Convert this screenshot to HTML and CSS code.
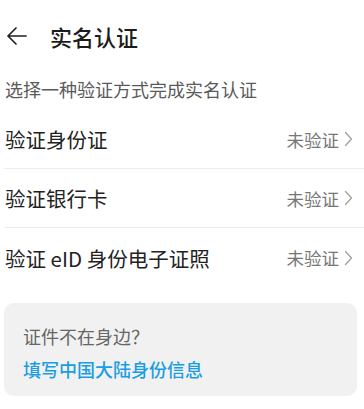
FILE: index.html
```html
<!DOCTYPE html>
<html lang="zh-CN">
<head>
<meta charset="utf-8">
<title>实名认证</title>
<link rel="stylesheet" href="styles.css">
</head>
<body>
<div class="page">
  <header class="header">
    <svg class="back" width="21" height="20" viewBox="0 0 21 20" aria-hidden="true">
      <path d="M20 10H2M10 2L2 10l8 8" fill="none" stroke="#222" stroke-width="1.7" stroke-linecap="round" stroke-linejoin="round"/>
    </svg>
    <h1 class="title">实名认证</h1>
  </header>
  <p class="subtitle">选择一种验证方式完成实名认证</p>
  <ul class="list">
    <li class="row"><span class="label">验证身份证</span><span class="status">未验证<svg class="chev" width="9" height="16" viewBox="0 0 9 16"><path d="M1.5 1.5L7.5 8L1.5 14.5" fill="none" stroke="#a0a0a0" stroke-width="1.3" stroke-linecap="round" stroke-linejoin="round"/></svg></span></li>
    <li class="row"><span class="label">验证银行卡</span><span class="status">未验证<svg class="chev" width="9" height="16" viewBox="0 0 9 16"><path d="M1.5 1.5L7.5 8L1.5 14.5" fill="none" stroke="#a0a0a0" stroke-width="1.3" stroke-linecap="round" stroke-linejoin="round"/></svg></span></li>
    <li class="row"><span class="label">验证 eID 身份电子证照</span><span class="status">未验证<svg class="chev" width="9" height="16" viewBox="0 0 9 16"><path d="M1.5 1.5L7.5 8L1.5 14.5" fill="none" stroke="#a0a0a0" stroke-width="1.3" stroke-linecap="round" stroke-linejoin="round"/></svg></span></li>
  </ul>
  <div class="card">
    <p class="card-text">证件不在身边？</p>
    <p class="card-link">填写中国大陆身份信息</p>
  </div>
</div>
</body>
</html>
```
FILE: styles.css
```css
* { box-sizing: border-box; }
html, body {
  margin: 0;
  padding: 0;
  background: #ffffff;
  font-family: "Noto Sans CJK SC", "Noto Sans", sans-serif;
  color: #222;
}
.page {
  width: 364px;
}
.header {
  height: 72px;
  display: flex;
  align-items: center;
  padding-left: 6px;
}
.back {
  flex: none;
}
.title {
  margin: 0 0 0 23px;
  font-size: 22px;
  font-weight: 500;
  line-height: 30px;
  color: #1c1c1c;
}
.subtitle {
  margin: 5px 0 9px 0;
  padding-left: 5px;
  font-size: 18px;
  line-height: 24px;
  color: #5a5a5a;
}
.list {
  list-style: none;
  margin: 0;
  padding: 0 0 0 4px;
}
.row {
  height: 59px;
  display: flex;
  align-items: center;
  justify-content: space-between;
  border-bottom: 1px solid #ebebeb;
  padding-right: 11px;
}
.row:last-child {
  border-bottom: none;
}
.label {
  font-size: 20.5px;
  line-height: 28px;
  color: #222;
  padding-left: 1px;
}
.status {
  display: flex;
  align-items: center;
  font-size: 17.5px;
  color: #777;
}
.chev {
  margin-left: 5px;
}
.card {
  margin: 16px 7px 0 4px;
  background: #f1f1f1;
  border-radius: 10px;
  padding: 22px 19px 16px 19px;
}
.card-text {
  margin: 0 0 11px 0;
  font-size: 18px;
  line-height: 22px;
  color: #666;
}
.card-link {
  margin: 0;
  font-size: 18px;
  line-height: 22px;
  font-weight: 500;
  color: #1a9de3;
}
```
